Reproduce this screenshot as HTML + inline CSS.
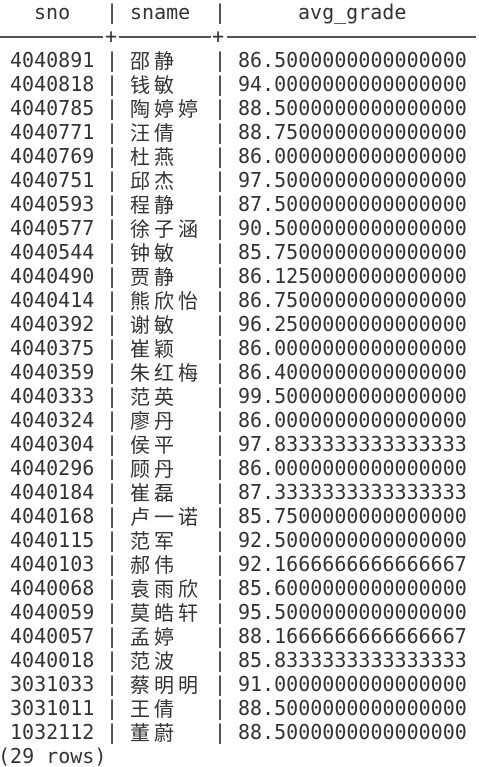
<!DOCTYPE html>
<html><head><meta charset="utf-8"><style>
html,body{margin:0;padding:0;background:#fff;width:479px;height:767px;overflow:hidden}
body{position:relative;font-family:"DejaVu Sans Mono","Liberation Mono","Noto Sans CJK SC",monospace;font-size:20px;color:#333;}
.r{position:absolute;left:0;height:24px;line-height:24px;width:479px;white-space:pre}
.r span{position:absolute;top:0}
.n{font-family:"Noto Sans CJK SC","WenQuanYi Zen Hei",sans-serif;letter-spacing:4px;font-size:20px}
.h{position:absolute;height:2px;background:#555;top:36px}
.p{position:absolute;top:24px;line-height:24px}
</style></head><body>
<div class="r" style="top:0"><span style="left:34px">sno</span><span style="left:106px">|</span><span style="left:130px">sname</span><span style="left:214px">|</span><span style="left:298px">avg_grade</span></div>
<div class="h" style="left:0;width:103px"></div><span class="p" style="left:105px">+</span>
<div class="h" style="left:119px;width:92px"></div><span class="p" style="left:212px">+</span>
<div class="h" style="left:227px;width:249px"></div>
<div id="rows"></div>
<div class="r" style="top:744px"><span style="left:-2px">(29 rows)</span></div>
<script>
var d=[["4040891","邵静","86.5000000000000000"],["4040818","钱敏","94.0000000000000000"],["4040785","陶婷婷","88.5000000000000000"],["4040771","汪倩","88.7500000000000000"],["4040769","杜燕","86.0000000000000000"],["4040751","邱杰","97.5000000000000000"],["4040593","程静","87.5000000000000000"],["4040577","徐子涵","90.5000000000000000"],["4040544","钟敏","85.7500000000000000"],["4040490","贾静","86.1250000000000000"],["4040414","熊欣怡","86.7500000000000000"],["4040392","谢敏","96.2500000000000000"],["4040375","崔颖","86.0000000000000000"],["4040359","朱红梅","86.4000000000000000"],["4040333","范英","99.5000000000000000"],["4040324","廖丹","86.0000000000000000"],["4040304","侯平","97.8333333333333333"],["4040296","顾丹","86.0000000000000000"],["4040184","崔磊","87.3333333333333333"],["4040168","卢一诺","85.7500000000000000"],["4040115","范军","92.5000000000000000"],["4040103","郝伟","92.1666666666666667"],["4040068","袁雨欣","85.6000000000000000"],["4040059","莫皓轩","95.5000000000000000"],["4040057","孟婷","88.1666666666666667"],["4040018","范波","85.8333333333333333"],["3031033","蔡明明","91.0000000000000000"],["3031011","王倩","88.5000000000000000"],["1032112","董蔚","88.5000000000000000"]];
var h="";d.forEach(function(x,i){h+='<div class="r" style="top:'+(48+i*24)+'px"><span style="left:10px">'+x[0]+'</span><span style="left:106px">|</span><span class="n" style="left:130px">'+x[1]+'</span><span style="left:214px">|</span><span style="left:238px">'+x[2]+'</span></div>';});
document.getElementById("rows").innerHTML=h;
</script>
</body></html>
